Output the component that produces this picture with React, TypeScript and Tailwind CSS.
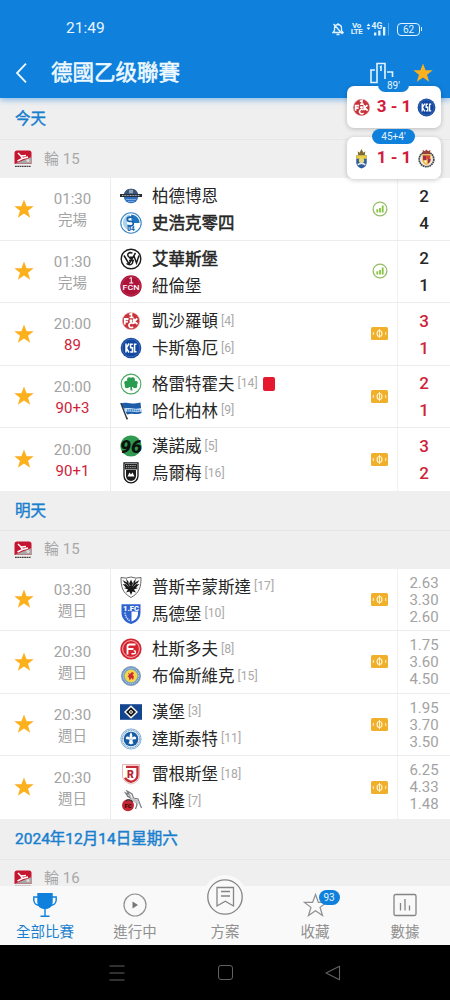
import { ReactNode } from "react";

type Team = {
  name: string;
  crest: string;
  rank?: number;
  bold?: boolean;
  redCard?: boolean;
};

type Match = {
  time: string;
  status: string;
  live?: boolean;
  home: Team;
  away: Team;
  score?: [number, number];
  odds?: [string, string, string];
};

const TODAY: Match[] = [
  {
    time: "01:30",
    status: "完場",
    home: { name: "柏德博恩", crest: "scp" },
    away: { name: "史浩克零四", crest: "s04", bold: true },
    score: [2, 4],
  },
  {
    time: "01:30",
    status: "完場",
    home: { name: "艾華斯堡", crest: "sve", bold: true },
    away: { name: "紐倫堡", crest: "fcn" },
    score: [2, 1],
  },
  {
    time: "20:00",
    status: "89",
    live: true,
    home: { name: "凱沙羅頓", crest: "fck", rank: 4 },
    away: { name: "卡斯魯厄", crest: "ksc", rank: 6 },
    score: [3, 1],
  },
  {
    time: "20:00",
    status: "90+3",
    live: true,
    home: { name: "格雷特霍夫", crest: "sgf", rank: 14, redCard: true },
    away: { name: "哈化柏林", crest: "bsc", rank: 9 },
    score: [2, 1],
  },
  {
    time: "20:00",
    status: "90+1",
    live: true,
    home: { name: "漢諾威", crest: "h96", rank: 5 },
    away: { name: "烏爾梅", crest: "ulm", rank: 16 },
    score: [3, 2],
  },
];

const TOMORROW: Match[] = [
  {
    time: "03:30",
    status: "週日",
    home: { name: "普斯辛蒙斯達", crest: "prm", rank: 17 },
    away: { name: "馬德堡", crest: "mag", rank: 10 },
    odds: ["2.63", "3.30", "2.60"],
  },
  {
    time: "20:30",
    status: "週日",
    home: { name: "杜斯多夫", crest: "f95", rank: 8 },
    away: { name: "布倫斯維克", crest: "ebs", rank: 15 },
    odds: ["1.75", "3.60", "4.50"],
  },
  {
    time: "20:30",
    status: "週日",
    home: { name: "漢堡", crest: "hsv", rank: 3 },
    away: { name: "達斯泰特", crest: "d98", rank: 11 },
    odds: ["1.95", "3.70", "3.50"],
  },
  {
    time: "20:30",
    status: "週日",
    home: { name: "雷根斯堡", crest: "ssv", rank: 18 },
    away: { name: "科隆", crest: "koe", rank: 7 },
    odds: ["6.25", "4.33", "1.48"],
  },
];

const STAR =
  "M12 1.5 14.8 9H22.6L16.4 13.8 18.7 21.6 12 17 5.3 21.6 7.6 13.8 1.4 9H9.2Z";

// Club crests, all drawn in a 22x22 box
const CRESTS: Record<string, ReactNode> = {
  scp: (
    <>
      <circle cx="11" cy="11" r="7.3" fill="#2f6fc0" />
      <path d="M4 9a7.3 7.3 0 0 1 14 0Z" fill="#3c5474" />
      <rect x="9" y="4.7" width="4" height="3.6" fill="#8fa3b8" />
      <rect x="0" y="9" width="22" height="3" fill="#26303d" />
      <path d="M2 10.500h18" stroke="#cfd9e4" strokeWidth=".8" strokeDasharray="1 .6" />
      <path d="M6 14.5h10M8 16.4h6" stroke="#9dc0ec" strokeWidth=".7" />
    </>
  ),
  s04: (
    <>
      <circle cx="11" cy="11" r="10.2" fill="#fff" stroke="#3c86c4" strokeWidth="1.1" />
      <path d="M11 2.4a8.6 8.6 0 0 1 8.6 8.6h-6.4L11.6 8Z" fill="#1f75bf" />
      <path d="M3 11c0-5 3.4-8.3 7-8.5v4L7 9v3l4 1v5.5c-5-.2-8-4-8-7.5Z" fill="#a9d2ef" />
      <path d="M13 5.200H9.500Q7.300 5.200 7.300 7.200T9.500 9.400h1.800q2 0 2 2.200t-2 2.200H7.500" fill="none" stroke="#1763aa" strokeWidth="1.7" />
      <text x="11" y="19" fontSize="6.5" fontWeight="700" textAnchor="middle" fill="#1763aa">04</text>
    </>
  ),
  sve: (
    <>
      <circle cx="11" cy="11" r="9.8" fill="#fff" stroke="#1c1c1c" strokeWidth="1.4" />
      <path d="M12.5 5.2C9 3.5 6 6.500 9 9l3 3c2.500 3-1.500 6.500-5.500 3.500M4 7.500l5 8.500L15.500 5M9 12.500h5M10 9.300h4M14 8l2.500 7L19 7.500" fill="none" stroke="#1c1c1c" strokeWidth="1.5" />
    </>
  ),
  fcn: (
    <>
      <circle cx="11" cy="11" r="10.7" fill="#ad1239" />
      <circle cx="11" cy="11" r="9.3" fill="none" stroke="#cf5b78" strokeWidth=".4" />
      <path d="M9.500 3.500 11.300 2.500V8M9.300 8h4" stroke="#fff" fill="none" />
      <text x="11" y="15" fontSize="7.5" fontWeight="500" textAnchor="middle" fill="#fff" textLength="17" lengthAdjust="spacingAndGlyphs">FCN</text>
    </>
  ),
  fck: (
    <>
      <circle cx="11" cy="11" r="8.6" fill="#c8323a" stroke="#e7a3a5" strokeWidth=".6" />
      <path d="M9.300 4.800 11.500 3.500V8M9.500 7.500h4" stroke="#fff" strokeWidth="1.600" fill="none" />
      <path d="M4.800 14.500V9H8.500M4.800 11.600H8M13.800 8.500V14M17.300 8.500 14.200 11.200 17.500 14.200" stroke="#fff" strokeWidth="1.800" fill="none" />
      <path d="M13 13.600Q11 12 9.500 13.800T10 17.300Q12 18.200 13.200 16.800" stroke="#fff" strokeWidth="1.600" fill="none" />
      <circle cx="11" cy="10.800" r="1.500" fill="#fff" />
    </>
  ),
  ksc: (
    <>
      <circle cx="11" cy="11" r="10.3" fill="#13479f" />
      <circle cx="11" cy="11" r="8.8" fill="none" stroke="#5680c4" strokeWidth=".6" />
      <path d="M6 6.500v9M9 6.500 6.300 11 9 15.500M12.800 7.200h-2.200v3.500h1.900v4.300h-2.300M16.500 7.200h-1.900v7.600h1.900" fill="none" stroke="#fff" strokeWidth="1.5" />
    </>
  ),
  sgf: (
    <>
      <circle cx="11" cy="11" r="9.9" fill="#fff" stroke="#49a860" strokeWidth="1.1" />
      <g fill="#2a9c4d">
        <circle cx="9.3" cy="6.5" r="2.300" />
        <circle cx="12.7" cy="6.5" r="2.300" />
        <circle cx="6.5" cy="10" r="2.300" />
        <circle cx="7" cy="13" r="2.300" />
        <circle cx="15.5" cy="10" r="2.300" />
        <circle cx="15" cy="13" r="2.300" />
        <path d="M7.500 7h7v7h-7ZM10.300 13h1.400l.8 4.500h-2Z" />
      </g>
    </>
  ),
  bsc: (
    <>
      <path d="M1 3.500C6 1.500 9 5 20.500 2.500L21.500 13c-5 2.500-8-.5-14.500 1.500Z" fill="#1d5ca8" />
      <path d="M4 8.500c6-1.500 10 1.500 17.100-.6l.3 3.600c-6 2-10-1-15.900.6Z" fill="#c9dff3" />
      <path d="M7 10.300c5-1.200 9 1 13 .2" fill="none" stroke="#3f8ad0" strokeWidth="1.7" strokeDasharray="1.500 .5" />
      <path d="M.8 3 7 19" stroke="#26303c" strokeWidth="1.3" />
      <circle cx="7" cy="18.5" r="1" fill="#444" />
    </>
  ),
  h96: (
    <>
      <circle cx="11" cy="11" r="10.6" fill="#2f9a50" />
      <text x="11" y="17.5" fontSize="18.5" fontWeight="900" fontStyle="italic" textAnchor="middle" fill="#0c120d" textLength="22" lengthAdjust="spacingAndGlyphs">96</text>
    </>
  ),
  ulm: (
    <>
      <path d="M4 .800h14v13a7 7 0 0 1-14 0Z" fill="#fff" stroke="#151515" strokeWidth="1.3" />
      <path d="M5 2h12v5.500H5Z" fill="#222" />
      <path d="M6 3.500h10M6 5.700h10" stroke="#eee" strokeWidth=".7" strokeDasharray="1.300 .8" />
      <path d="M6 8h10v6a5 5 0 0 1-10 0Z" fill="#1b1b1b" />
      <path d="m7.500 14.500 2-4 1.500 2 1.500-2 2 4Z" fill="#fff" />
    </>
  ),
  prm: (
    <>
      <path d="M1 1.500q5 1.500 10-.5 5 2 10 .5c0 9-1 15-10 20C2 16.500 1 10.500 1 1.500Z" fill="#fff" stroke="#555" strokeWidth=".9" />
      <path d="M11 3.500 9.500 7 6 2.500l1 4L2.500 4l3 4.500-3-.5 3.500 3.500-2 .5 4 1.500-2 3 3.500-1L11 19l1.500-3.500 3.500 1-2-3 4-1.500-2-.5L19.500 8l-3 .5 3-4.500L15 6.500l1-4L12.500 7Z" fill="#181818" />
      <path d="m8 6 2 4M14 6l-2 4M5 7l3.500 3.500M17 7l-3.500 3.500" stroke="#fff" strokeWidth=".5" />
    </>
  ),
  mag: (
    <>
      <path d="M1.500 1.300h19V9c0 6-3 10-9.500 12C4.500 19 1.500 15 1.500 9Z" fill="#2e63cf" />
      <path d="M11.500 8.500H18V10c0 4-2 7-6.500 8.500Z" fill="#fff" />
      <text x="11" y="8" fontSize="7" fontWeight="900" textAnchor="middle" fill="#fff" textLength="16" lengthAdjust="spacingAndGlyphs">1.FC</text>
      <path d="M5 9.500c.3 3.800 2 6.500 5 8.300" fill="none" stroke="#c6d7f8" strokeWidth="1.6" strokeDasharray="1.300 .8" />
    </>
  ),
  f95: (
    <>
      <circle cx="11" cy="11" r="10.6" fill="#d4232f" />
      <circle cx="11" cy="11" r="8.4" fill="none" stroke="#f6c6c6" strokeWidth=".9" />
      <path d="M7.500 16.500V8.500q0-2 2-2h6M7.500 11h6" fill="none" stroke="#fff" strokeWidth="1.8" />
      <path d="M11.500 15.800h2.300q1.700 0 1.700-1.600T13.800 12.700" fill="none" stroke="#fff" strokeWidth="1.4" />
    </>
  ),
  ebs: (
    <>
      <circle cx="11" cy="11" r="9.6" fill="#6c9bc9" stroke="#77839a" strokeWidth=".6" />
      <circle cx="11" cy="11" r="7.8" fill="none" stroke="#d3e1e9" strokeWidth="1" strokeDasharray="1 1" />
      <circle cx="11" cy="11" r="6.5" fill="#f4d64c" />
      <path d="m8 7.500 2 1.500 2-2 2 1-1.500 2 1.500 1.500-1 3.500-1.500-2-2 2.500-.5-3-1.500-1 1.500-1.500Z" fill="#cb2b32" />
    </>
  ),
  hsv: (
    <>
      <rect x="0" y="3.2" width="22" height="15.6" fill="#14458f" />
      <path d="m11 4.300 7 6.700-7 6.700L4 11Z" fill="#fff" />
      <path d="m11 6.200 5 4.800-5 4.800L6 11Z" fill="#111" />
      <path d="m11 8.700 2.400 2.300-2.400 2.300L8.600 11Z" fill="#fff" />
      <path d="m11 9.900 1.100 1.100-1.100 1.100L9.900 11Z" fill="#111" />
    </>
  ),
  d98: (
    <>
      <circle cx="11" cy="11" r="10.1" fill="#e8f1f9" stroke="#6c9fcc" strokeWidth=".8" />
      <circle cx="11" cy="11" r="8.7" fill="none" stroke="#6a9cca" strokeWidth="1.1" strokeDasharray="1 .7" />
      <circle cx="11" cy="11" r="7.3" fill="#175ba2" />
      <path d="M11 4.300c1.800 2.600 1.500 4.300.9 6 .3-2 3.500-2.800 4.300-.5.2 1.700-1.500 2.100-2.300 1.300l-1.400 1.300c0 1.500.7 2.400 1.200 3-.9.200-1.900 0-2.700 1.400-.8-1.400-1.800-1.200-2.700-1.400.5-.6 1.200-1.500 1.200-3L8.100 11.100c-.8.800-2.500.4-2.300-1.300.8-2.300 4-1.500 4.300.5-.6-1.700-.9-3.400.9-6Z" fill="#fff" />
      <path d="M10 10.500v1.800M12 10.500v1.800" stroke="#175ba2" strokeWidth=".5" />
    </>
  ),
  ssv: (
    <>
      <path d="M2.500 1.500h17V12c0 5-3.500 8-8.500 9-5-1-8.500-4-8.500-9Z" fill="#fff" stroke="#d99a9d" strokeWidth=".7" />
      <path d="M6 3.800h11.500V12c0 3.500-2.500 6-6.500 6.800-3-.6-5-2-6-4" fill="none" stroke="#c62e37" strokeWidth="2.300" />
      <text x="10.500" y="14.500" fontSize="10.5" fontWeight="900" textAnchor="middle" fill="#b9202b">R</text>
    </>
  ),
  koe: (
    <>
      <path d="M12 9 8 6.500 5.500 3 9 4.500 7 1l5 3 1.500 4L18 9l1.500 4 2 5M16 11l1 4-1.500 4M11 6l-4 .5" fill="none" stroke="#77797c" strokeWidth="1.200" />
      <path d="M8 3.500 12 8l6 2 1.500 4-4-1-3-2Z" fill="#c3c5c8" />
      <circle cx="8" cy="15.200" r="6" fill="#c42633" />
      <path d="M6 11a4 4 0 0 1 6.500 1" stroke="#333" fill="none" strokeWidth="1.200" />
      <text x="8" y="18" fontSize="6" fontWeight="900" textAnchor="middle" fill="#38090d">FC</text>
    </>
  ),
  lpa: (
    <>
      <path d="M5.500 7.500h11v7.500q0 5-5.500 6.500-5.500-1.500-5.500-6.500Z" fill="#2b5d9f" />
      <path d="M7 3.500l2 1.500L11 1l2 4 2-1.500-.5 4h-7Z" fill="#7e6a2e" />
      <path d="M5.500 7.700h11v3.500h-11Z" fill="#f1cf3b" />
      <circle cx="11" cy="13" r="2.800" fill="#e7d77a" />
      <path d="M7 17.500q4-2.500 8 0" fill="none" stroke="#e5ebf3" strokeWidth="1.7" />
    </>
  ),
  vll: (
    <>
      <circle cx="11" cy="12" r="8.5" fill="#f1e9e1" stroke="#43484d" strokeWidth="2" strokeDasharray="2 .6" />
      <path d="M6.500 1 9 2.500 11 .5l2 2L15.500 1 15 6H7Z" fill="#9b4038" />
      <path d="M6 6.500h10v5.500q0 5-5 6.500-5-1.500-5-6.500Z" fill="#efba37" />
      <path d="M7 7.500h4V13H7ZM12.500 11.500H16l-1 3.500-2.500 2Z" fill="#9c2f55" />
      <path d="M11 7.500h4v4h-4Z" fill="#d94137" />
      <path d="m8 13.500 3 3.500V13Z" fill="#fff" />
    </>
  ),
};

function Crest({ id, className = "size-[22px]" }: { id: string; className?: string }) {
  return (
    <svg viewBox="0 0 22 22" className={`${className} shrink-0 font-[Roboto,sans-serif]`}>
      {CRESTS[id]}
    </svg>
  );
}

function GoldStar() {
  return (
    <svg viewBox="0 0 24 24" className="size-[22px] shrink-0 fill-[#fbb01c]">
      <path d={STAR} />
    </svg>
  );
}

function StatusBar() {
  return (
    <div className="flex h-[29px] items-center justify-between pt-[29px] pr-[30px] pl-[66px] text-white">
      <span className="text-[15.500px] text-[#e9f5ff]">21:49</span>
      <div className="flex items-center text-[#e2f3ff]">
        <svg viewBox="0 0 12 14" className="mr-[7px] h-[14px] w-[12px]" fill="none" stroke="currentColor" strokeWidth="1.3">
          <path d="M1 10.500h10L9.500 8.500V6Q9.500 3 6 2.500 2.500 3 2.500 6v2.500ZM4.500 12.500h3M1.500 2l9 10M6 1v1.500" />
        </svg>
        <div className="mr-[4px] flex w-[11px] flex-col items-center text-[8px] leading-[6.500px] font-bold tracking-[-0.4px]">
          <span>Vo</span>
          <span>LTE</span>
        </div>
        <svg viewBox="0 0 24 14" className="mr-[7px] h-[14px] w-[24px]" fill="currentColor">
          <path d="m.5 4 2-2.500 2 2.500ZM.5 5.500h4L2.500 8Z" />
          <text x="5.500" y="6.800" fontSize="8.500" fontWeight="700">4G</text>
          <path d="M8 10.500h2.300v3H8ZM12.200 8.500h2.300v5h-2.300ZM17 5h2.300v8.500H17Z" />
          <path d="M22 1h.8v12.500H22Z" opacity=".45" />
        </svg>
        <div className="relative flex h-[13px] w-[23px] items-center justify-center rounded-[4px] border border-current text-[10px]">
          62
          <span className="absolute top-[3.500px] -right-[3px] h-[4px] w-[1.500px] bg-current" />
        </div>
      </div>
    </div>
  );
}

function Header() {
  return (
    <header className="relative z-10 h-[98px] shrink-0 bg-[#0f80dc] shadow-[0_2px_6px_rgba(50,140,220,0.55)]">
      <StatusBar />
      <div className="mt-[23px] flex h-[42px] items-center pr-[16px] pl-[15px]">
        <svg viewBox="0 0 12 20" className="h-[20px] w-[12px]" fill="none" stroke="#f0f9ff" strokeWidth="1.8">
          <path d="M11 .7 2 10l9 9.300" />
        </svg>
        <h1 className="ml-[24px] text-[21.500px] leading-[30px] text-[#edf8ff] [-webkit-text-stroke:0.6px_currentColor]">
          德國乙级聯賽
        </h1>
        <svg viewBox="0 0 24 22" className="ml-auto h-[22px] w-[24px]" fill="none" stroke="#e3f4ff" strokeWidth="1.6">
          <path d="M5 8H1v12.500h6V1.500h8V21M15 10h-1M17 10h5.500v5M11 9V4.500L9.800 5.300" />
        </svg>
        <svg viewBox="0 0 24 24" className="ml-[18px] size-[22px] fill-[#fbb01c]">
          <path d={STAR} />
        </svg>
      </div>
    </header>
  );
}

function LiveCard({ home, away, score }: { home: string; away: string; score: string }) {
  return (
    <div className="flex h-[42px] w-[94px] items-center rounded-[7px] bg-white pl-[4px] shadow-[0_1px_5px_rgba(0,0,0,0.22)]">
      <Crest id={home} className="size-[21px]" />
      <span className="w-[45px] text-center text-[17px] font-bold whitespace-pre text-[#d21c3c]">{score}</span>
      <Crest id={away} className="size-[19px]" />
    </div>
  );
}

// Running matches, floating over the list
function LiveOverlay() {
  return (
    <div className="absolute top-[86px] left-[346.500px] z-20 flex flex-col gap-[9px]">
      <div className="relative">
        <LiveCard home="fck" away="ksc" score="3 - 1" />
        <span className="absolute -top-[7px] left-[31.500px] flex h-[13px] w-[31px] items-center justify-center rounded-b-[7px] bg-[#0f80dc] text-[10px] text-[#e3f4ff]">
          89'
        </span>
      </div>
      <div className="relative">
        <LiveCard home="lpa" away="vll" score="1 - 1" />
        <span className="absolute -top-[8px] left-[25.500px] flex h-[15px] w-[43px] items-center justify-center rounded-full bg-[#0f80dc] text-[10px] text-[#e3f4ff]">
          45+4'
        </span>
      </div>
    </div>
  );
}

function DayHeader({ title, className = "h-[42px]" }: { title: string; className?: string }) {
  return (
    <div className={`${className} shrink-0 border-b border-[#e6e6e6] pl-[15px]`}>
      <h2 className="flex h-[43px] items-center text-[15.500px] text-[#197fce] [-webkit-text-stroke:0.45px_currentColor]">
        {title}
      </h2>
    </div>
  );
}

function RoundRow({ round }: { round: number }) {
  return (
    <div className="flex h-[38px] shrink-0 items-center pl-[14px] text-[15px] text-[#a8a8a8]">
      <svg viewBox="0 0 18 18" className="mr-[12px] size-[18px]">
        <path d="M3 .5h12Q17.500.5 17.500 3v11H.5V3Q.5.500 3 .5Z" fill="#c5142f" />
        <path d="M.5 13.800 17.500 7v6.800Z" fill="#aaa6a4" />
        <path d="m4 3 3 3 5-.5M7 6l1.500 2.500-5 2.500M8.500 8.500 14 7" fill="none" stroke="#fff" strokeWidth="1.5" />
        <circle cx="14" cy="10.500" r="1.600" fill="#ddd" />
        <path d="M1 16.300h16" stroke="#44403f" strokeWidth="1.3" strokeDasharray="1.800 .5" />
      </svg>
      輪 {round}
    </div>
  );
}

function TeamLine({ team }: { team: Team }) {
  return (
    <div className="flex h-[27px] items-center whitespace-nowrap">
      <Crest id={team.crest} />
      <span
        className={`ml-[10px] pt-px text-[16.500px] leading-[27px] text-[#262626] ${team.bold ? "[-webkit-text-stroke:0.5px_currentColor]" : ""}`}
      >
        {team.name}
      </span>
      {team.rank && (
        <span className="ml-[3px] text-[12.200px] text-[#a9a9a9]">[{team.rank}]</span>
      )}
      {team.redCard && <span className="ml-[5px] h-[14px] w-[12px] rounded-[2px] bg-[#e5182d]" />}
    </div>
  );
}

function MatchRow({ match }: { match: Match }) {
  const finished = !match.live && match.score;

  return (
    <div className="flex h-[62.500px] shrink-0 border-b border-[#ececec] bg-white last:border-b-0">
      <div className="flex w-[111px] items-center border-r border-[#ececec] pl-[13px]">
        <GoldStar />
        <div className="flex w-[75px] flex-col items-center pt-[3px] text-[15px] leading-[21px] text-[#a3a3a3]">
          <span>{match.time}</span>
          <span className={match.live ? "text-[#cf2238]" : "text-[14.500px]"}>{match.status}</span>
        </div>
      </div>
      <div className="flex-1 pt-[4.500px] pl-[9px]">
        <TeamLine team={match.home} />
        <TeamLine team={match.away} />
      </div>
      <div className="flex w-[36px] items-center justify-center">
        {finished ? (
          <svg viewBox="0 0 16 16" className="ml-[2px] size-[16px]" fill="none">
            <circle cx="8" cy="8" r="6.900" stroke="#94bd66" strokeWidth="1.3" />
            <path d="M5.300 8.300V11.500M8 7v4.500M10.700 4.500v7" stroke="#86c440" strokeWidth="1.8" />
          </svg>
        ) : (
          <svg viewBox="0 0 17 13" className="h-[13px] w-[17px]" fill="none">
            <rect width="17" height="13" rx="1.500" fill="#f1b02c" />
            <ellipse cx="8.500" cy="6.500" rx="2.400" ry="3" stroke="#fff2c8" strokeWidth="1.2" />
            <path d="M8.500 2v9M2.300 5v3M14.700 5v3" stroke="#fff2c8" />
          </svg>
        )}
      </div>
      <div className="w-[53px] border-l border-[#f1f1f1] text-center">
        {match.score && (
          <div
            className={`pt-[4.500px] text-[17px] leading-[27px] font-medium ${match.live ? "text-[#cf2238]" : "text-[#262626]"}`}
          >
            <div>{match.score[0]}</div>
            <div>{match.score[1]}</div>
          </div>
        )}
        {match.odds && (
          <div className="pt-[6px] text-[15px] leading-[17.200px] text-[#a3a3a3]">
            {match.odds.map((odd) => (
              <div key={odd}>{odd}</div>
            ))}
          </div>
        )}
      </div>
    </div>
  );
}

function NavItem({ label, active, children }: { label: string; active?: boolean; children: ReactNode }) {
  return (
    <div className={`relative flex flex-1 flex-col items-center ${active ? "text-[#197fce]" : "text-[#909090]"}`}>
      <div className="relative flex h-[38px] items-center justify-center">{children}</div>
      <span className="pt-px text-[14.500px] leading-[15px]">{label}</span>
    </div>
  );
}

function BottomNav() {
  return (
    <nav className="relative z-10 flex h-[59px] shrink-0 bg-[#f9f9f9]">
      <NavItem label="全部比賽" active>
        <svg viewBox="0 0 24 24" className="size-[24px]" fill="none" stroke="#0f80dc" strokeWidth="1.4">
          <path d="M5 .7h14V9q0 6-7 6.500Q5 15 5 9Z" fill="#0f80dc" />
          <path d="M5 4H.8v3Q1 12 6.500 12.500M19 4h4.200v3q-.2 5-5.700 5.500M12 15v8M7.500 23.200h9" />
        </svg>
      </NavItem>
      <NavItem label="進行中">
        <svg viewBox="0 0 24 24" className="size-[24px]" fill="none">
          <circle cx="12" cy="12" r="11" stroke="currentColor" strokeWidth="1.2" />
          <path d="M9.500 8.500v7l5.500-3.500Z" fill="#777" />
        </svg>
      </NavItem>
      <NavItem label="方案">
        <div className="absolute -top-[11px] flex size-[44px] items-center justify-center rounded-full bg-[#f9f9f9]">
          <svg viewBox="0 0 36 36" className="size-[36px]" fill="none" stroke="#858585" strokeWidth="1.3">
            <circle cx="18" cy="18" r="17.200" />
            <path d="M10 8.500h16.500V27l-8.200-4.700L10 27ZM14 12.500h9M14 17h9" />
          </svg>
        </div>
      </NavItem>
      <NavItem label="收藏">
        <svg viewBox="0 0 24 24" className="size-[25px]" fill="none" stroke="currentColor" strokeWidth="1.2">
          <path d={STAR} />
        </svg>
        <span className="absolute top-[4px] left-[16px] flex h-[15px] w-[21px] items-center justify-center rounded-full bg-[#0f80dc] text-[10px] text-[#e3f4ff]">
          93
        </span>
      </NavItem>
      <NavItem label="數據">
        <svg viewBox="0 0 24 24" className="size-[24px]" fill="none" stroke="#858585" strokeWidth="1.3">
          <rect x="1" y="1.500" width="22" height="21" rx="1.500" />
          <path d="M7.500 10v7.500M12 6v11.500M16.500 12.500v5" />
        </svg>
      </NavItem>
    </nav>
  );
}

function SystemBar() {
  return (
    <div className="flex h-[55px] shrink-0 items-center justify-between bg-black px-[108px]">
      <svg viewBox="0 0 18 18" className="size-[18px]" fill="none" stroke="#626262" strokeWidth="1.2">
        <path d="M1.500 2h15M1.500 9h15M1.500 16h15" />
      </svg>
      <div className="size-[15px] rounded-[3px] border border-[#626262]" />
      <svg viewBox="0 0 18 18" className="size-[18px]" fill="none" stroke="#626262" strokeWidth="1.1" strokeLinejoin="round">
        <path d="M2 9 15.500 2.200v13.600Z" />
      </svg>
    </div>
  );
}

export default function App() {
  return (
    <div className="relative flex h-[1000px] w-[450px] flex-col overflow-hidden bg-[#efefef] font-[Roboto,'Noto_Sans_CJK_TC',sans-serif]">
      <Header />
      <LiveOverlay />
      <main className="flex min-h-0 flex-1 flex-col overflow-hidden">
        <DayHeader title="今天" />
        <RoundRow round={15} />
        <section>
          {TODAY.map((match) => (
            <MatchRow key={match.home.crest} match={match} />
          ))}
        </section>
        <DayHeader title="明天" className="h-10" />
        <RoundRow round={15} />
        <section>
          {TOMORROW.map((match) => (
            <MatchRow key={match.home.crest} match={match} />
          ))}
        </section>
        <DayHeader title="2024年12月14日星期六" className="h-[41px]" />
        <RoundRow round={16} />
      </main>
      <BottomNav />
      <SystemBar />
    </div>
  );
}
